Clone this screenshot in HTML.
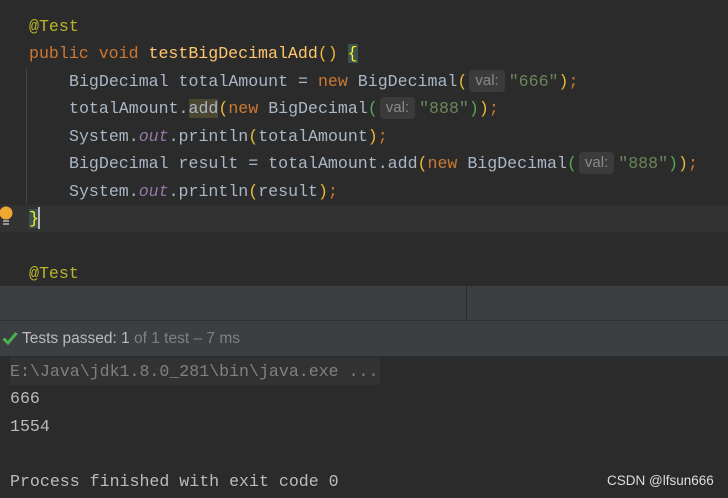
<!DOCTYPE html>
<html><head><meta charset="utf-8"><style>
*{margin:0;padding:0;box-sizing:border-box}
body{width:728px;height:498px;background:#2b2b2b;position:relative;overflow:hidden;font-family:"Liberation Mono",monospace;font-size:16.6px;color:#a9b7c6}
.l{position:absolute;height:27px;line-height:27px;white-space:pre}
.k{color:#cc7832}.a{color:#bbb529}.m{color:#ffc66d}.o{color:#9876aa;font-style:italic}.s{color:#6a8759}
.y{color:#e8ba36}.g{color:#54a857}
.h{display:inline-block;background:#3b3b3b;color:#8a8a8a;font-family:"Liberation Sans",sans-serif;font-size:15px;line-height:22px;height:22px;padding:0 6px;border-radius:4px;margin:0 4px 0 2px;vertical-align:1px}
.abs{position:absolute}
</style></head><body>
<div class="abs" style="left:0;top:205px;width:728px;height:27px;background:#323232"></div>
<div class="abs" style="left:26px;top:68px;width:1px;height:136px;background:#3a4a3a"></div>
<div class="l a" style="left:29px;top:13px">@Test</div>
<div class="l" style="left:29px;top:40px"><span class="k">public void </span><span class="m">testBigDecimalAdd</span><span class="y">() </span><span style="background:#3b514d;color:#ffef28">{</span></div>
<div class="l" style="left:69px;top:68px">BigDecimal totalAmount = <span class="k">new </span>BigDecimal<span class="y">(</span><span class="h">val:</span><span class="s">"666"</span><span class="y">)</span><span class="k">;</span></div>
<div class="l" style="left:69px;top:95px">totalAmount.<span style="background:#4a4630">add</span><span class="y">(</span><span class="k">new </span>BigDecimal<span class="g">(</span><span class="h">val:</span><span class="s">"888"</span><span class="g">)</span><span class="y">)</span><span class="k">;</span></div>
<div class="l" style="left:69px;top:123px">System.<span class="o">out</span>.println<span class="y">(</span>totalAmount<span class="y">)</span><span class="k">;</span></div>
<div class="l" style="left:69px;top:150px">BigDecimal result = totalAmount.add<span class="y">(</span><span class="k">new </span>BigDecimal<span class="g">(</span><span class="h">val:</span><span class="s">"888"</span><span class="g">)</span><span class="y">)</span><span class="k">;</span></div>
<div class="l" style="left:69px;top:178px">System.<span class="o">out</span>.println<span class="y">(</span>result<span class="y">)</span><span class="k">;</span></div>
<div class="l" style="left:29px;top:205px"><span style="background:#3b514d;color:#ffef28">}</span></div>
<div class="abs" style="left:38px;top:207px;width:2px;height:22px;background:#bbb"></div>
<svg class="abs" style="left:0;top:206px" width="14" height="22"><circle cx="6" cy="7" r="6.5" fill="#f0a732"/><rect x="3" y="14" width="6" height="2" fill="#999"/><rect x="3" y="17" width="6" height="2" fill="#999"/></svg>
<div class="l a" style="left:29px;top:260px">@Test</div>
<div class="abs" style="left:0;top:286px;width:728px;height:34px;background:#3c3f41"></div>
<div class="abs" style="left:466px;top:286px;width:1px;height:34px;background:#2b2b2b"></div>
<div class="abs" style="left:0;top:320px;width:728px;height:1px;background:#2f3133"></div>
<div class="abs" style="left:0;top:321px;width:728px;height:35px;background:#3c3f41"></div>
<svg class="abs" style="left:2px;top:331px" width="16" height="14"><path d="M1.5 7.5 L6 12 L14.5 2" stroke="#4caf50" stroke-width="3" fill="none"/></svg>
<div class="abs" style="left:22px;top:321px;height:35px;line-height:35px;font-family:'Liberation Sans',sans-serif;font-size:15.5px;color:#bbbbbb;white-space:pre">Tests passed: 1 <span style="color:#808080">of 1 test – 7 ms</span></div>
<div class="abs" style="left:10px;top:357px;width:370px;height:28px;background:#323232"></div>
<div class="l" style="left:10px;top:358px;color:#808080">E:\Java\jdk1.8.0_281\bin\java.exe ...</div>
<div class="l" style="left:10px;top:385px;color:#bbbbbb">666</div>
<div class="l" style="left:10px;top:413px;color:#bbbbbb">1554</div>
<div class="l" style="left:10px;top:468px;color:#bbbbbb">Process finished with exit code 0</div>
<div class="abs" style="left:607px;top:473px;font-family:'Liberation Sans',sans-serif;font-size:13.5px;color:#dddddd">CSDN @lfsun666</div>
</body></html>
